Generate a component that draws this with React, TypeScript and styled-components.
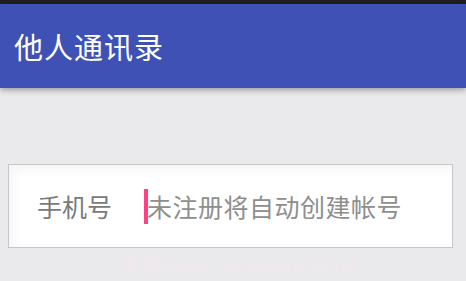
import React from 'react';
import styled, { createGlobalStyle } from 'styled-components';

const GlobalStyle = createGlobalStyle`
  html, body {
    margin: 0;
    padding: 0;
    background: #eaeaec;
    font-family: "Noto Sans CJK SC", "Noto Sans", sans-serif;
  }
`;

const Page = styled.div`
  width: 466px;
  height: 281px;
  overflow: hidden;
  background: #eaeaec;
  display: flex;
  flex-direction: column;
`;

const StatusBar = styled.div`
  height: 4px;
  background: #1e1f21;
`;

const AppBar = styled.header`
  height: 84px;
  background: #3f51b5;
  display: flex;
  align-items: center;
  padding-left: 14px;
  box-shadow: 0 2px 6px rgba(0, 0, 0, 0.35);
  position: relative;
  z-index: 1;
`;

const Title = styled.h1`
  margin: 0;
  color: #ffffff;
  font-size: 29px;
  font-weight: 400;
  letter-spacing: 1px;
  line-height: 1;
`;

const Content = styled.main`
  padding: 76px 14px 0 8px;
  display: flex;
  flex-direction: column;
  align-items: flex-start;
`;

const InputCard = styled.div`
  box-sizing: border-box;
  width: 445px;
  height: 84px;
  border: 1px solid #c6c6c6;
  background: #ffffff;
  box-shadow: inset 6px 6px 10px rgba(0, 0, 0, 0.035);
  display: flex;
  align-items: center;
  padding-left: 28px;
`;

const Label = styled.span`
  width: 107px;
  color: #7a7a7a;
  font-size: 25px;
  line-height: 1;
`;

const Field = styled.div`
  display: flex;
  align-items: center;
`;

const Cursor = styled.span`
  width: 4px;
  height: 35px;
  background: #ff4081;
  margin-right: -1px;
`;

const Placeholder = styled.span`
  color: #8e8e8e;
  font-size: 25px;
  line-height: 1;
  letter-spacing: 0.5px;
`;

const Watermark = styled.div`
  margin: 3px 0 0 112px;
  color: #f0e8ee;
  font-size: 19px;
  font-weight: 700;
  letter-spacing: 1px;
  font-family: "Liberation Sans", "Noto Sans CJK SC", sans-serif;
`;

export default function App() {
  return (
    <>
      <GlobalStyle />
      <Page>
        <StatusBar />
        <AppBar>
          <Title>他人通讯录</Title>
        </AppBar>
        <Content>
          <InputCard>
            <Label>手机号</Label>
            <Field>
              <Cursor />
              <Placeholder>未注册将自动创建帐号</Placeholder>
            </Field>
          </InputCard>
          <Watermark>手游5588 • MX5588.COM</Watermark>
        </Content>
      </Page>
    </>
  );
}
